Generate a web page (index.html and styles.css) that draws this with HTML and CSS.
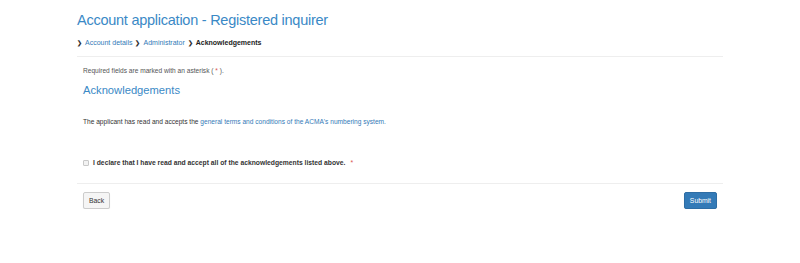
FILE: index.html
```html
<!DOCTYPE html>
<html lang="en">
<head>
  <meta charset="UTF-8" />
  <title>Account application - Registered inquirer</title>
  <link rel="stylesheet" href="styles.css">
</head>
<body>
  <div class="container">
    <h1 class="page-title">Account application - Registered inquirer</h1>

    <ol class="steps">
      <li><span class="chev">&#x276F;</span><a href="#">Account details</a></li>
      <li><span class="chev">&#x276F;</span><a href="#">Administrator</a></li>
      <li class="current"><span class="chev">&#x276F;</span>Acknowledgements</li>
    </ol>

    <hr />

    <form class="form">
      <p class="required-note">Required fields are marked with an asterisk ( <span class="req">*</span> ).</p>

      <h2 class="section-title">Acknowledgements</h2>

      <p class="ack-text">The applicant has read and accepts the <a href="#">general terms and conditions of the ACMA's numbering system.</a></p>

      <label class="declare">
        <input type="checkbox" />
        <span>I declare that I have read and accept all of the acknowledgements listed above.</span>
        <span class="req">*</span>
      </label>

      <hr />

      <div class="actions">
        <button type="button" class="btn">Back</button>
        <button type="submit" class="btn btn-primary">Submit</button>
      </div>
    </form>
  </div>
</body>
</html>
```

FILE: styles.css
```css
body {
  font-family: "Liberation Sans", Arial, Helvetica, sans-serif;
  background: #fff;
  color: #333;
  margin: 0;
}

a {
  color: #337ab7;
  text-decoration: none;
}

.container {
  width: 646px;
  margin: 0 auto;
  padding-top: 11px;
}

.page-title {
  font-size: 14.5px;
  letter-spacing: -0.25px;
  font-weight: normal;
  color: #3a89c6;
  margin: 0;
  line-height: 18px;
}

.steps {
  list-style: none;
  margin: 9px 0 0;
  padding: 0;
  display: flex;
  gap: 3px;
  font-size: 7px;
  line-height: 10px;
}

.steps li {
  display: flex;
  align-items: center;
}

.chev {
  font-size: 6px;
  font-weight: bold;
  color: #333;
  margin-right: 3px;
}

.steps .current {
  font-weight: bold;
  color: #222;
}

hr {
  border: none;
  border-top: 1px solid #eee;
  margin: 8px 0;
}

.form {
  padding: 0 6px;
}

.required-note {
  font-size: 6.6px;
  color: #555;
  margin: 10px 0 0;
  line-height: 8px;
}

.req {
  color: #d9534f;
}

.section-title {
  font-size: 11.2px;
  font-weight: normal;
  color: #3a89c6;
  margin: 9px 0 0;
  line-height: 13px;
}

.ack-text {
  font-size: 6.6px;
  color: #333;
  margin: 21px 0 0;
  line-height: 8px;
}

.declare {
  display: flex;
  align-items: center;
  gap: 4px;
  margin-top: 33px;
  font-size: 6.75px;
  font-weight: bold;
  color: #333;
}

.declare input {
  appearance: none;
  width: 6px;
  height: 6px;
  margin: 0;
  border: 1px solid #c8c8c8;
  border-radius: 1px;
  background: #f2f2f2;
}

.declare .req {
  font-weight: normal;
  margin-left: 1px;
}

.form hr {
  margin: 17px -6px 8px;
}

.actions {
  display: flex;
  justify-content: space-between;
}

.btn {
  font-family: inherit;
  font-size: 6.8px;
  padding: 0 5px;
  height: 17px;
  border: 1px solid #ccc;
  border-radius: 2px;
  background: #f5f5f5;
  color: #333;
  box-shadow: 0 1px 1px rgba(0,0,0,0.08);
}

.btn-primary {
  background: #337ab7;
  border-color: #2e6da4;
  color: #fff;
}
```
